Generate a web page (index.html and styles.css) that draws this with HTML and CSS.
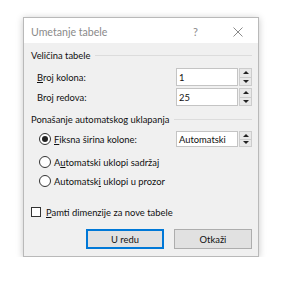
FILE: index.html
```html
<!DOCTYPE html>
<html lang="sr">
<head>
  <meta charset="UTF-8" />
  <title>Umetanje tabele</title>
  <link rel="stylesheet" href="styles.css">
</head>
<body>
  <div class="dialog">
    <div class="titlebar">
      <div class="title">Umetanje tabele</div>
      <div class="help">?</div>
      <div class="close">
        <svg width="10" height="10" viewBox="0 0 10 10"><path d="M0.5 0.5 L9.5 9.5 M9.5 0.5 L0.5 9.5" stroke="#8a8a8a" stroke-width="1" fill="none"/></svg>
      </div>
    </div>

    <div class="body">
      <div class="group-head head-first"><span>Veličina tabele</span><div class="rule"></div></div>

      <div class="field-row">
        <div class="label"><u>B</u>roj kolona:</div>
        <div class="spin">
          <div class="spin-input">1</div>
          <div class="spin-btns"><div class="half"><div class="arrow up"></div></div><div class="half"><div class="arrow down"></div></div></div>
        </div>
      </div>
      <div class="field-row row-second">
        <div class="label">Bro<u>j</u> redova:</div>
        <div class="spin">
          <div class="spin-input">25</div>
          <div class="spin-btns"><div class="half"><div class="arrow up"></div></div><div class="half"><div class="arrow down"></div></div></div>
        </div>
      </div>

      <div class="group-head head-second"><span>Ponašanje automatskog uklapanja</span><div class="rule"></div></div>

      <div class="radio-row radio-first">
        <div class="radio checked"></div>
        <div class="radio-label"><u>F</u>iksna širina kolone:</div>
        <div class="spin spin-small">
          <div class="spin-input">Automatski</div>
          <div class="spin-btns"><div class="half"><div class="arrow up"></div></div><div class="half"><div class="arrow down"></div></div></div>
        </div>
      </div>
      <div class="radio-row radio-second">
        <div class="radio"></div>
        <div class="radio-label">A<u>u</u>tomatski uklopi sadržaj</div>
      </div>
      <div class="radio-row radio-third">
        <div class="radio"></div>
        <div class="radio-label">Automatsk<u>i</u> uklopi u prozor</div>
      </div>

      <div class="check-row">
        <div class="checkbox"></div>
        <div class="check-label"><u>P</u>amti dimenzije za nove tabele</div>
      </div>

      <div class="buttons">
        <div class="btn btn-default">U redu</div>
        <div class="btn">Otkaži</div>
      </div>
    </div>
  </div>
</body>
</html>
```

FILE: styles.css
```css
body {
  margin: 0;
  background: #fff;
  font-family: Lato, "Noto Sans", sans-serif;
  font-size: 9.4px;
  color: #111;
}
.dialog {
  margin: 17px 0 0 23px;
  width: 234px;
  height: 238px;
  border: 1px solid #b9b9b9;
  background: #f0f0f0;
  box-shadow: 0 1px 7px rgba(0, 0, 0, 0.22);
  display: flex;
  flex-direction: column;
}
.titlebar {
  height: 25px;
  background: #fff;
  display: flex;
  align-items: center;
  padding-left: 7px;
}
.title {
  flex: 1;
  font-size: 10.6px;
  color: #8a8a8a;
  padding-top: 2px;
}
.help {
  width: 14px;
  color: #8a8a8a;
  font-size: 11px;
  margin-right: 26px;
  padding-top: 2px;
}
.close {
  width: 10px;
  height: 10px;
  margin-right: 15px;
  margin-top: 2px;
  display: flex;
}
.body {
  padding: 0 6px 0 7px;
  display: flex;
  flex-direction: column;
}
.group-head {
  display: flex;
  align-items: center;
  gap: 5px;
  height: 14px;
}
.head-first { margin-top: 5px; }
.head-second { margin-top: 6px; }
.rule {
  flex: 1;
  height: 1px;
  background: #dcdcdc;
}
.field-row {
  display: flex;
  align-items: center;
  height: 18px;
  margin-top: 6px;
}
.row-second { margin-top: 2px; }
.label {
  flex: 1;
  padding-left: 6px;
}
.spin {
  display: flex;
  height: 18px;
  gap: 1px;
}
.spin-input {
  width: 58px;
  border: 1px solid #c4c4c4;
  background: #fff;
  padding-left: 2px;
  display: flex;
  align-items: center;
}
.spin-btns {
  width: 13px;
  display: flex;
  flex-direction: column;
}
.half {
  flex: 1;
  border: 1px solid #cccccc;
  background: #e8e8e8;
  display: flex;
  align-items: center;
  justify-content: center;
}
.half + .half { border-top: none; }
.spin-small { height: 16px; }
.arrow {
  width: 0;
  height: 0;
  border-left: 3px solid transparent;
  border-right: 3px solid transparent;
}
.up { border-bottom: 3px solid #222; }
.down { border-top: 3px solid #222; }
.radio-row {
  display: flex;
  align-items: center;
  height: 16px;
  padding-left: 8px;
}
.radio-first { margin-top: 5px; }
.radio-second { margin-top: 7px; }
.radio-third { margin-top: 3px; }
.radio {
  width: 12px;
  height: 12px;
  border: 1px solid #333;
  border-radius: 50%;
  background: #fff;
  box-sizing: border-box;
  display: flex;
  align-items: center;
  justify-content: center;
}
.radio.checked::after {
  content: "";
  width: 6px;
  height: 6px;
  border-radius: 50%;
  background: #222;
}
.radio-label {
  flex: 1;
  padding-left: 3px;
}
.check-row {
  display: flex;
  align-items: center;
  height: 14px;
  margin-top: 16px;
}
.checkbox {
  width: 10px;
  height: 10px;
  border: 1px solid #333;
  background: #fff;
  box-sizing: border-box;
}
.check-label { padding-left: 5px; }
.buttons {
  display: flex;
  justify-content: flex-end;
  gap: 10px;
  margin-top: 10px;
}
.btn {
  width: 76px;
  height: 18px;
  border: 1px solid #adadad;
  background: #e1e1e1;
  display: flex;
  align-items: center;
  justify-content: center;
}
.btn-default {
  border-color: #0078d7;
  box-shadow: inset 0 0 0 1px #0078d7;
}
```
